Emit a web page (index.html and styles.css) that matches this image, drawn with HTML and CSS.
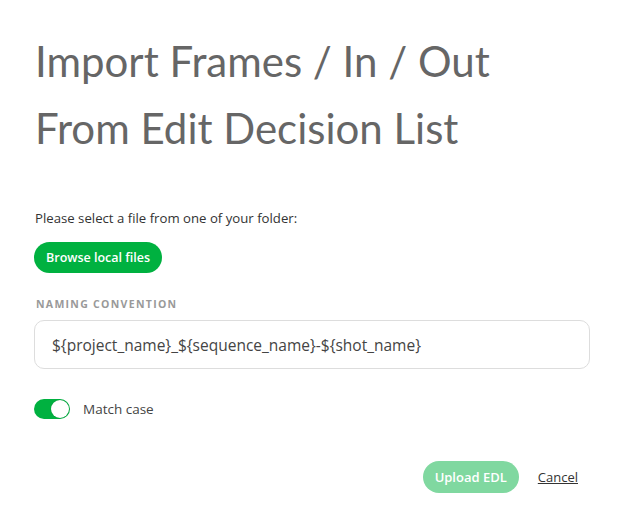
FILE: index.html
```html
<!DOCTYPE html>
<html>
<head>
<meta charset="utf-8">
<link rel="stylesheet" href="styles.css">
</head>
<body>
<div class="dialog">
  <h1 class="title">Import Frames / In / Out<br>From Edit Decision List</h1>
  <p class="hint">Please select a file from one of your folder:</p>
  <button class="btn btn-primary">Browse local files</button>
  <label class="field-label">NAMING CONVENTION</label>
  <div class="input">${project_name}_${sequence_name}-${shot_name}</div>
  <div class="toggle-row">
    <span class="toggle"><span class="knob"></span></span>
    <span class="toggle-label">Match case</span>
  </div>
  <div class="actions">
    <button class="btn btn-disabled">Upload EDL</button>
    <a class="link">Cancel</a>
  </div>
</div>
</body>
</html>
```

FILE: styles.css
```css
html, body {
  margin: 0;
  padding: 0;
  background: #fff;
}
body {
  font-family: "Open Sans", "Noto Sans", sans-serif;
  color: #333;
}
.dialog {
  padding: 28px 37px 0 34px;
  display: flex;
  flex-direction: column;
  align-items: flex-start;
}
.title {
  font-family: Lato, sans-serif;
  font-weight: 400;
  font-size: 42px;
  line-height: 67px;
  color: #666;
  margin: 0 0 0 1px;
}
.hint {
  font-size: 13.2px;
  margin: 47px 0 0 1px;
  line-height: 18px;
  color: #333;
}
.btn {
  border: none;
  border-radius: 16px;
  font-family: "Open Sans", sans-serif;
  font-weight: 600;
  color: #fff;
  height: 31px;
  padding: 0 12px;
  font-size: 12.5px;
}
.btn-primary {
  background: #00b140;
  margin-top: 15px;
}
.field-label {
  margin-top: 24px;
  font-size: 10.5px;
  font-weight: 700;
  letter-spacing: 1.3px;
  color: #999;
  margin-left: 2px;
}
.input {
  align-self: stretch;
  margin-top: 9px;
  height: 47px;
  border: 1px solid #ddd;
  border-radius: 10px;
  display: flex;
  align-items: center;
  padding-left: 17px;
  font-size: 15.5px;
  color: #444;
}
.toggle-row {
  margin-top: 30px;
  display: flex;
  align-items: center;
  gap: 13px;
}
.toggle {
  width: 36px;
  height: 20px;
  border-radius: 10px;
  background: #00b140;
  position: relative;
}
.knob {
  position: absolute;
  right: 1px;
  top: 1px;
  width: 18px;
  height: 18px;
  border-radius: 50%;
  background: #fff;
  box-shadow: 0 0 1px rgba(0,0,0,0.3);
}
.toggle-label {
  font-size: 13.5px;
  color: #444;
}
.actions {
  align-self: stretch;
  margin-top: 42px;
  display: flex;
  justify-content: flex-end;
  align-items: center;
  gap: 19px;
}
.btn-disabled {
  background: #80d8a0;
  font-size: 13px;
  height: 32px;
}
.link {
  font-size: 13px;
  color: #333;
  text-decoration: underline;
  margin-right: 12px;
}
```
